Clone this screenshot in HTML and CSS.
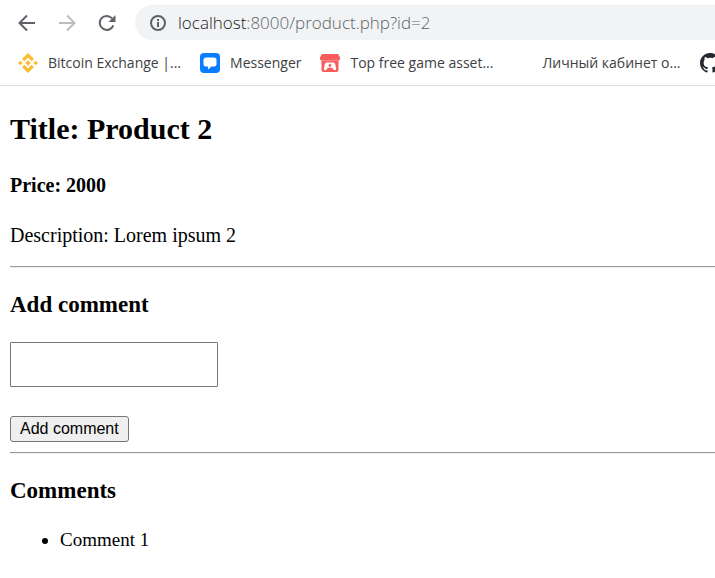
FILE: index.html
```
<!DOCTYPE html>
<html lang="en">
<head>
<meta charset="utf-8">
<title>Product 2</title>
<link rel="stylesheet" href="styles.css">
</head>
<body>
<header class="browser">
  <div class="toolbar">
    <button class="nav" type="button" aria-label="Back"><svg viewBox="0 0 20 20"><path d="M18 10H3M10 2.500 2.500 10l7.500 7.500"/></svg></button>
    <button class="nav" type="button" aria-label="Forward" disabled><svg viewBox="0 0 20 20"><path d="M2 10h15M10 2.500 17.500 10 10 17.500"/></svg></button>
    <button class="nav" type="button" aria-label="Reload"><svg viewBox="0 0 20 20"><path d="M16.300 12.300A7 7 0 1 1 15 5.300"/><path class="solid" d="M18.500 2v7h-7z"/></svg></button>
    <div class="address">
      <svg class="info" viewBox="0 0 18 18"><circle cx="9" cy="9" r="7"/><path d="M9 8v5M9 5v2"/></svg>
      <span class="url">localhost<span class="path">:8000/product.php?id=2</span></span>
    </div>
  </div>
  <nav class="bookmarks" aria-label="Bookmarks">
    <a class="bookmark" href="#">
      <svg viewBox="0 0 20 20" fill="#fbbc2e"><path d="m10 0 6 6-2.300 2.300L10 4.600 6.300 8.300 4 6zM10 20l-6-6 2.300-2.300 3.700 3.700 3.700-3.700L16 14zM2.300 7.700 4.600 10l-2.300 2.300L0 10zM17.700 7.700 20 10l-2.300 2.300-2.300-2.300zM10 7.200l2.800 2.800-2.800 2.800L7.200 10z"/></svg>
      <span>Bitcoin Exchange |...</span>
    </a>
    <a class="bookmark" href="#">
      <svg viewBox="0 0 20 20"><rect width="20" height="20" rx="4" fill="#0a7cff"/><path fill="#fff" d="M6 4.500h8a2.500 2.500 0 0 1 2.500 2.500v4a2.500 2.500 0 0 1-2.500 2.500h-2.500L8 16.500v-3H6A2.500 2.500 0 0 1 3.500 11V7A2.500 2.500 0 0 1 6 4.500z"/></svg>
      <span>Messenger</span>
    </a>
    <a class="bookmark" href="#">
      <svg viewBox="0 0 20 20"><path fill="#fa5c5c" d="M2 1h16l2 3.500V6q-.5 1.500-1.500 1.500V17q0 2-2 2h-13q-2 0-2-2V7.500Q.5 7.500 0 6V4.500z"/><path fill="#fff" d="M1.500 6.500q1.500 1.700 3.200 0 1.700 1.700 3.500 0 1.800 1.700 3.600 0 1.800 1.700 3.500 0 1.700 1.700 3.200 0v1q-1.800 1.200-3.200.2-1.700 1-3.500 0-1.800 1-3.600 0-1.800 1-3.500 0-1.700 1-3.200-.2z" opacity=".3"/><path fill="#fff" d="M6 9.500h8l1.200 1.500 1 5.200q-1.200 1.800-2.700.2L12 14.700H8l-1.500 1.700q-1.500 1.600-2.700-.2l1-5.200z"/><path fill="#fa5c5c" d="m10 10.500 2 2h-1v1.200H9v-1.200H8z"/></svg>
      <span>Top free game asset...</span>
    </a>
    <a class="bookmark" href="#">
      <svg viewBox="0 0 20 20"></svg>
      <span lang="ru">Личный кабинет о...</span>
    </a>
    <a class="bookmark" href="#" aria-label="GitHub">
      <svg viewBox="0 0 16 16" fill="#24292f"><path d="M8 0C3.580 0 0 3.580 0 8c0 3.540 2.290 6.530 5.470 7.590.4.070.55-.17.55-.38 0-.19-.01-.82-.01-1.490-2.010.37-2.530-.49-2.690-.94-.09-.23-.48-.94-.82-1.130-.28-.15-.68-.52-.01-.53.630-.01 1.080.58 1.230.82.72 1.210 1.870.87 2.330.66.070-.52.28-.87.51-1.070-1.780-.2-3.640-.89-3.640-3.950 0-.87.31-1.590.82-2.150-.08-.2-.36-1.020.08-2.120 0 0 .67-.21 2.200.82A7.600 7.600 0 0 1 8 3.860c.68 0 1.360.09 2 .27 1.530-1.040 2.200-.82 2.200-.82.44 1.100.16 1.920.08 2.120.51.56.82 1.270.82 2.150 0 3.070-1.870 3.750-3.650 3.950.29.25.54.73.54 1.480 0 1.070-.01 1.930-.01 2.200 0 .21.15.46.55.38A8.010 8.010 0 0 0 16 8c0-4.420-3.580-8-8-8z"/></svg>
    </a>
  </nav>
</header>
<main class="page">
  <h2>Title: Product 2</h2>
  <h4>Price: 2000</h4>
  <p>Description: Lorem ipsum 2</p>
  <hr>
  <h3>Add comment</h3>
  <form class="comment-form">
    <textarea aria-label="Comment"></textarea>
    <button type="button">Add comment</button>
  </form>
  <hr>
  <h3>Comments</h3>
  <ul>
    <li>Comment 1</li>
  </ul>
</main>
</body>
</html>
```
FILE: styles.css
```
body {
  margin: 0;
  background: #fff;
  color: #000;
  font: 20px/24px "Liberation Serif", serif;
  overflow-x: hidden;
}

.browser {
  border-bottom: 1px solid #dadce0;
  font-family: "Open Sans", "Noto Sans", sans-serif;
}

.toolbar {
  display: flex;
  align-items: center;
  gap: 20px;
  padding: 5px 0 0 17px;
}

.nav {
  width: 20px;
  height: 20px;
  padding: 0;
  border: 0;
  background: none;
  color: #5f6368;
}

.nav:disabled {
  color: #babcbe;
}

.nav svg {
  display: block;
  fill: none;
  stroke: currentColor;
  stroke-width: 2;
}

.nav .solid {
  fill: currentColor;
  stroke: none;
}

.address {
  display: flex;
  flex: 1;
  align-items: center;
  gap: 11px;
  height: 35px;
  margin-left: -2px;
  padding-left: 14px;
  border-radius: 18px 0 0 18px;
  background: #f1f3f4;
}

.info {
  width: 18px;
  fill: none;
  stroke: #5f6368;
  stroke-width: 2;
}

.url {
  color: #202124;
  font-size: 17px;
  font-weight: 300;
}

.path {
  color: #5f6368;
}

.bookmarks {
  display: flex;
  gap: 19px;
  height: 45px;
  padding-left: 18px;
  overflow: hidden;
}

.bookmark {
  display: flex;
  flex: none;
  align-items: center;
  gap: 10px;
  color: #3c4043;
  font-size: 14px;
  text-decoration: none;
  white-space: nowrap;
}

.bookmark svg {
  width: 20px;
  height: 20px;
}

.page {
  padding-left: 10px;
}

h2 {
  margin: 25px 0;
  font-size: 30px;
  line-height: 36px;
}

h3 {
  margin: 23px 0;
  font-size: 23px;
  line-height: 28px;
}

h4 {
  margin: 26px 0;
  font-size: 20px;
}

p {
  margin: 19px 0;
}

hr {
  height: 0;
  margin: 10px 0;
  border: 0;
  border-top: 1px solid #9a9a9a;
  border-bottom: 1px solid #eee;
}

.comment-form {
  display: flex;
  flex-direction: column;
  align-items: flex-start;
  gap: 29px;
}

textarea {
  box-sizing: border-box;
  width: 208px;
  height: 45px;
  border: 1px solid #767676;
  border-radius: 1px;
  resize: none;
}

.comment-form button {
  height: 26px;
  padding: 0 9px;
  border: 1px solid #767676;
  border-radius: 3px;
  background: #efefef;
  color: #000;
  font: 16px/22px "Liberation Sans", sans-serif;
}

ul {
  margin: 20px 0;
  padding-left: 50px;
  font-size: 19px;
}
```
